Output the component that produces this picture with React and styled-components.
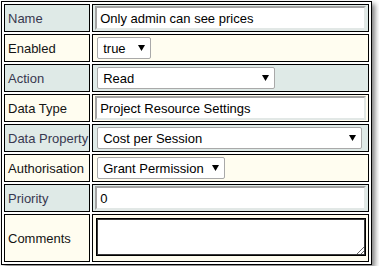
import React from 'react';
import styled, { createGlobalStyle } from 'styled-components';

const Global = createGlobalStyle`
  html, body { margin: 0; padding: 0; background: #fff; }
  body { font-family: "Liberation Sans", Arial, sans-serif; font-size: 13px; }
  * { box-sizing: border-box; }
`;

const Page = styled.div`
  padding: 1px;
`;

const Table = styled.table`
  border-collapse: separate;
  border-spacing: 2px;
  border: 1px solid #000;
  background: #fff;
  box-shadow: 3px 3px 5px rgba(0, 0, 0, 0.5);
`;

const Row = styled.tr`
  background: ${(p) => (p.$alt ? '#fffdf0' : '#dfeae7')};
`;

const Label = styled.td`
  border: 1px solid #000;
  width: 86px;
  height: 28px;
  padding: 0 1px 0 3px;
  white-space: nowrap;
  vertical-align: middle;
  color: ${(p) => (p.$alt ? '#141414' : '#38384f')};
`;

const Value = styled.td`
  border: 1px solid #000;
  width: 276px;
  height: 28px;
  padding: 0 2px;
  vertical-align: middle;
`;

const TextInput = styled.input`
  display: block;
  width: 100%;
  height: 24px;
  margin: 0;
  padding: 0 3px;
  font: inherit;
  color: #000;
  background: #fff;
  border-style: solid;
  border-width: 2px;
  border-color: #a3a3a3 #e2e8e6 #e2e8e6 #a3a3a3;
  outline: none;
`;

const SelectWrap = styled.span`
  position: relative;
  display: block;
  width: ${(p) => p.$w}px;
  height: 22px;
  margin-left: 2px;
`;

const Select = styled.select`
  appearance: none;
  -webkit-appearance: none;
  display: block;
  width: 100%;
  height: 22px;
  margin: 0;
  padding: 0 18px 0 5px;
  font: inherit;
  color: #000;
  background: #fff;
  border: 1px solid #a9a9a9;
  border-radius: 2px;
  outline: none;
`;

const Arrow = styled.svg`
  position: absolute;
  right: 6px;
  top: 8px;
  pointer-events: none;
`;

const TextArea = styled.textarea`
  display: block;
  width: 270px;
  height: 38px;
  margin: 3px 0 5px 1px;
  padding: 2px;
  font: inherit;
  background: #fff;
  border: 1px solid #000;
  box-shadow: inset 0 0 0 1px #3a3a3a;
  outline: none;
`;

function Dropdown({ width, value }) {
  return (
    <SelectWrap $w={width}>
      <Select defaultValue={value}>
        <option value={value}>{value}</option>
      </Select>
      <Arrow width="7" height="6" viewBox="0 0 7 6">
        <polygon points="0,0 7,0 3.5,6" fill="#000" />
      </Arrow>
    </SelectWrap>
  );
}

const rows = [
  { label: 'Name', kind: 'text', value: 'Only admin can see prices' },
  { label: 'Enabled', kind: 'select', value: 'true', width: 54 },
  { label: 'Action', kind: 'select', value: 'Read', width: 178 },
  { label: 'Data Type', kind: 'text', value: 'Project Resource Settings' },
  { label: 'Data Property', kind: 'select', value: 'Cost per Session', width: 265 },
  { label: 'Authorisation', kind: 'select', value: 'Grant Permission', width: 128 },
  { label: 'Priority', kind: 'text', value: '0' },
  { label: 'Comments', kind: 'area', value: '' },
];

export default function App() {
  return (
    <Page>
      <Global />
      <Table>
        <tbody>
          {rows.map((r, i) => {
            const alt = i % 2 === 1;
            return (
              <Row key={r.label} $alt={alt}>
                <Label $alt={alt}>{r.label}</Label>
                <Value>
                  {r.kind === 'text' && <TextInput defaultValue={r.value} />}
                  {r.kind === 'select' && <Dropdown width={r.width} value={r.value} />}
                  {r.kind === 'area' && <TextArea defaultValue="" />}
                </Value>
              </Row>
            );
          })}
        </tbody>
      </Table>
    </Page>
  );
}
